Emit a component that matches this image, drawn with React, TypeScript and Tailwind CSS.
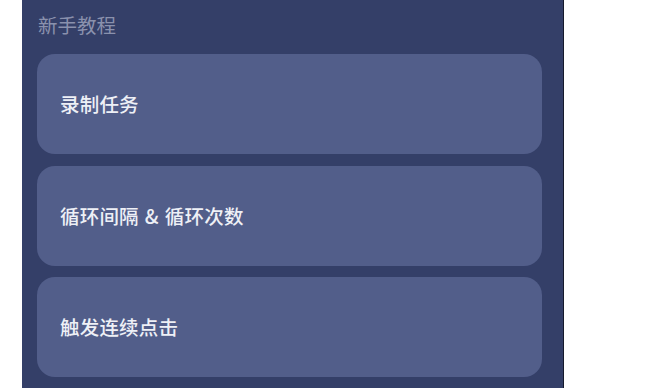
export default function App() {
  const items: [string, string?][] = [["录制任务"], ["循环间隔", "循环次数"], ["触发连续点击"]];
  return (
    <div
      className="w-[671px] h-[388px] bg-white flex overflow-hidden"
      style={{ fontFamily: '"Noto Sans CJK SC", "Noto Sans", sans-serif' }}
    >
      <div className="ml-[22px] w-[542px] h-full bg-[#343f68] border-r border-[#151a2c] pl-[15px] pr-[21px] flex flex-col">
        <div className="pt-[11px] h-[54px] pl-[1px] text-[19.5px] leading-[28px] text-[#8a91ad]">新手教程</div>
        <div className="flex flex-col gap-[11.5px]">
          {items.map(([a, b]) => (
            <div
              key={a}
              className="h-[100px] rounded-[18px] bg-[#525e8a] flex items-center pl-[23px] text-[19.5px] font-medium tracking-[0.2px] text-[#eef0f6] whitespace-pre"
            >
              <span>{a}</span>
              {b && (
                <>
                  <span className="mx-[6px]">&amp;</span>
                  <span>{b}</span>
                </>
              )}
            </div>
          ))}
        </div>
      </div>
    </div>
  );
}
